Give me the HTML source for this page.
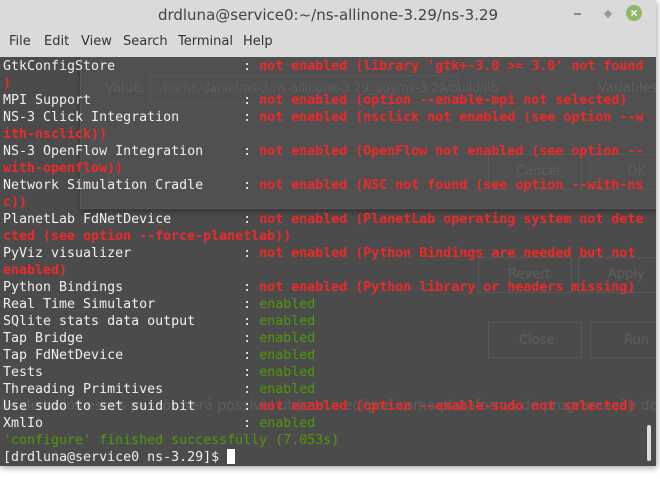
<!DOCTYPE html>
<html><head><meta charset="utf-8"><style>
html,body{margin:0;padding:0;width:660px;height:479px;overflow:hidden;background:#fff;}
.win{position:absolute;left:0;top:0;width:656px;height:466px;background:#dadada;box-shadow:1px 2px 6px rgba(0,0,0,.35);}
.title{position:absolute;left:0;top:6px;width:656px;text-align:center;font:15px "DejaVu Sans","Liberation Sans",sans-serif;color:#444;}
.menu{position:absolute;top:34px;font:13px "DejaVu Sans","Liberation Sans",sans-serif;color:#333;}
.term{position:absolute;left:0;top:57px;width:656px;height:409px;background:#4b4b4b;overflow:hidden;}
.ghost{position:absolute;border:1px solid #575757;}
.gt{position:absolute;font:13px "DejaVu Sans","Liberation Sans",sans-serif;color:#5e5e5e;white-space:nowrap;}
pre{position:absolute;left:3px;top:1px;margin:0;font:13.3px/17px "DejaVu Sans Mono","Liberation Mono",monospace;color:#f0f0f0;}
.r{color:#ef2929;font-weight:bold;}
.g{color:#4e9a06;}
.cur{display:inline-block;width:8px;height:15px;background:#fff;vertical-align:-3px;}
</style></head><body>
<div class="win">
<div class="title">drdluna@service0:~/ns-allinone-3.29/ns-3.29</div>
<div style="position:absolute;left:574px;top:13px;width:7px;height:2px;background:#888"></div>
<div style="position:absolute;left:605px;top:11px;width:6px;height:6px;background:#999;transform:rotate(45deg)"></div>
<div style="position:absolute;left:626px;top:5px;width:16px;height:16px;border-radius:50%;background:#8fb86b;color:#fff;font:bold 12px sans-serif;text-align:center;line-height:16px">×</div>
<div class="menu" style="left:9px">File</div>
<div class="menu" style="left:44px">Edit</div>
<div class="menu" style="left:81px">View</div>
<div class="menu" style="left:123px">Search</div>
<div class="menu" style="left:178px">Terminal</div>
<div class="menu" style="left:243px">Help</div>
<div class="term">
<div class="ghost" style="left:80px;top:-10px;width:580px;height:160px;background:#505050;box-shadow:0 3px 6px rgba(0,0,0,.3)"></div>
<div class="ghost" style="left:150px;top:18px;width:307px;height:26px"></div>
<div class="gt" style="left:105px;top:24px">Value:</div>
<div class="gt" style="left:160px;top:24px;font-size:12px">/home/daniel/ns-3/ns-allinone-3.29_auv/ns-3.29/build/lib</div>
<div class="gt" style="left:598px;top:24px">Variables...</div>
<div class="ghost" style="left:488px;top:97px;width:92px;height:34px"></div>
<div class="gt" style="left:516px;top:107px">Cancel</div>
<div class="ghost" style="left:590px;top:97px;width:70px;height:34px"></div>
<div class="gt" style="left:627px;top:107px">OK</div>
<div class="ghost" style="left:478px;top:200px;width:92px;height:34px"></div>
<div class="gt" style="left:508px;top:210px">Revert</div>
<div class="ghost" style="left:578px;top:200px;width:80px;height:34px"></div>
<div class="gt" style="left:608px;top:210px">Apply</div>
<div class="ghost" style="left:488px;top:265px;width:92px;height:34px"></div>
<div class="gt" style="left:519px;top:276px">Close</div>
<div class="ghost" style="left:590px;top:265px;width:70px;height:34px"></div>
<div class="gt" style="left:624px;top:276px">Run</div>
<div class="gt" style="left:0px;top:341px;font-size:14px">ão de todos esses passos será possível utilizar o eclipse como plataforma de programação do ns-3.</div>
<div style="position:absolute;left:647px;top:368px;width:4px;height:36px;background:#ddd;border-radius:2px"></div>
<pre>GtkConfigStore                : <span class="r">not enabled (library 'gtk+-3.0 &gt;= 3.0' not found</span>
<span class="r">)</span>
MPI Support                   : <span class="r">not enabled (option --enable-mpi not selected)</span>
NS-3 Click Integration        : <span class="r">not enabled (nsclick not enabled (see option --w</span>
<span class="r">ith-nsclick))</span>
NS-3 OpenFlow Integration     : <span class="r">not enabled (OpenFlow not enabled (see option --</span>
<span class="r">with-openflow))</span>
Network Simulation Cradle     : <span class="r">not enabled (NSC not found (see option --with-ns</span>
<span class="r">c))</span>
PlanetLab FdNetDevice         : <span class="r">not enabled (PlanetLab operating system not dete</span>
<span class="r">cted (see option --force-planetlab))</span>
PyViz visualizer              : <span class="r">not enabled (Python Bindings are needed but not </span>
<span class="r">enabled)</span>
Python Bindings               : <span class="r">not enabled (Python library or headers missing)</span>
Real Time Simulator           : <span class="g">enabled</span>
SQlite stats data output      : <span class="g">enabled</span>
Tap Bridge                    : <span class="g">enabled</span>
Tap FdNetDevice               : <span class="g">enabled</span>
Tests                         : <span class="g">enabled</span>
Threading Primitives          : <span class="g">enabled</span>
Use sudo to set suid bit      : <span class="r">not enabled (option --enable-sudo not selected)</span>
XmlIo                         : <span class="g">enabled</span>
<span class="g">'configure' finished successfully (7.053s)</span>
[drdluna@service0 ns-3.29]$ <span class="cur"></span></pre>
</div>
</div>
</body></html>
